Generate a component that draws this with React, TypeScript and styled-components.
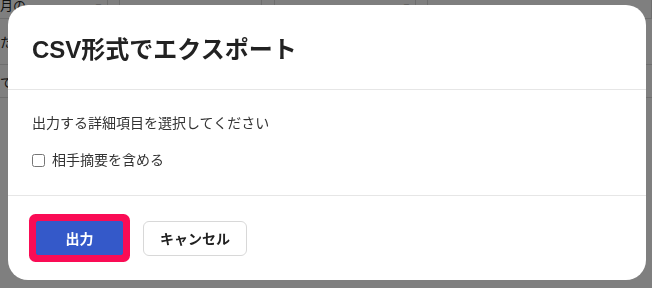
import React from 'react'
import styled, { createGlobalStyle } from 'styled-components'

const GlobalStyle = createGlobalStyle`
  html, body {
    margin: 0;
    padding: 0;
    width: 652px;
    height: 288px;
    overflow: hidden;
    font-family: "Liberation Sans", "Noto Sans CJK JP", sans-serif;
  }
`;

const Page = styled.div`
  width: 652px;
  height: 288px;
  background: #fff;
  color: #222;
  font-size: 13px;
`;

const FilterRow = styled.div`
  display: grid;
  grid-template-columns: 108px 12px 142px 13px 141px 12px 1fr;
  height: 18px;
  border-bottom: 1px solid #ddd;
`;

const FilterCell = styled.div`
  display: flex;
  align-items: flex-end;
  justify-content: space-between;
  padding: 0 4px 6px 0;
  border-right: 1px solid #ddd;
  font-size: 13px;
  line-height: 1;
  overflow: hidden;
`;

const Caret = styled.span`
  font-size: 9px;
  margin-left: auto;
`;

const TableRow = styled.div<{ $h: number }>`
  height: ${p => p.$h}px;
  border-bottom: 1px solid #ddd;
  display: flex;
  align-items: center;
  font-size: 13px;
`;

const Overlay = styled.div`
  position: fixed;
  inset: 0;
  background: rgba(0, 0, 0, 0.5);
  padding: 5px 6px 8px 8px;
  box-sizing: border-box;
  display: flex;
`;

const Modal = styled.div`
  flex: 1;
  background: #fff;
  border-radius: 20px;
  display: flex;
  flex-direction: column;
  overflow: hidden;
`;

const Header = styled.div`
  height: 84px;
  display: flex;
  align-items: center;
  padding: 0 24px;
  border-bottom: 1px solid #e6e6e6;
`;

const Title = styled.h2`
  margin: 0;
  font-size: 24px;
  font-weight: 700;
  color: #222;
`;

const Body = styled.div`
  height: 106px;
  padding: 23px 24px 0;
  box-sizing: border-box;
  border-bottom: 1px solid #e6e6e6;
  display: flex;
  flex-direction: column;
  gap: 17px;
  font-size: 14px;
  color: #333;
`;

const Line = styled.p`
  margin: 0;
  line-height: 20px;
`;

const CheckLabel = styled.label`
  display: flex;
  align-items: center;
  gap: 7px;
  line-height: 20px;
`;

const Box = styled.input`
  margin: 0;
  width: 13px;
  height: 13px;
`;

const Footer = styled.div`
  flex: 1;
  display: flex;
  align-items: center;
  gap: 20px;
  padding: 0 28px;
`;

const Button = styled.button<{ $primary?: boolean }>`
  box-sizing: border-box;
  width: ${p => (p.$primary ? '87px' : '104px')};
  height: ${p => (p.$primary ? '34px' : '35px')};
  padding: 0;
  white-space: nowrap;
  border-radius: ${p => (p.$primary ? '2px' : '6px')};
  font-family: inherit;
  font-size: 14px;
  font-weight: 700;
  cursor: pointer;
  border: 1px solid ${p => (p.$primary ? '#3459c9' : '#d8d8d8')};
  background: ${p => (p.$primary ? '#3459c9' : '#fff')};
  color: ${p => (p.$primary ? '#fff' : '#222')};
  box-shadow: ${p => (p.$primary ? '0 0 0 7px #fa0c55' : 'none')};
`;

const App = () => {
  return (
    <>
      <GlobalStyle />
      <Page>
        <FilterRow>
          <FilterCell>月の<Caret>▼</Caret></FilterCell>
          <FilterCell />
          <FilterCell><Caret>⌄</Caret></FilterCell>
          <FilterCell />
          <FilterCell><Caret>▼</Caret></FilterCell>
          <FilterCell />
          <FilterCell />
        </FilterRow>
        <TableRow $h={45}>た</TableRow>
        <TableRow $h={32}>て</TableRow>
      </Page>
      <Overlay>
        <Modal>
          <Header>
            <Title>CSV形式でエクスポート</Title>
          </Header>
          <Body>
            <Line>出力する詳細項目を選択してください</Line>
            <CheckLabel>
              <Box type="checkbox" />
              相手摘要を含める
            </CheckLabel>
          </Body>
          <Footer>
            <Button $primary>出力</Button>
            <Button>キャンセル</Button>
          </Footer>
        </Modal>
      </Overlay>
    </>
  )
}

export default App
